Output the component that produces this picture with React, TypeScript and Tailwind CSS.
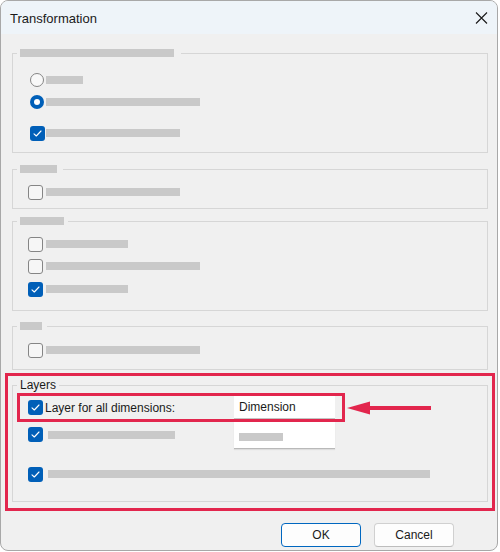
import React from "react";

const FONT = { fontFamily: '"Liberation Sans", Arial, sans-serif' };

function Bar({ w }: { w: number }) {
  return <div className="h-[8px] bg-[#c9c9c9]" style={{ width: w }} />;
}

function Check({ checked }: { checked?: boolean }) {
  if (checked) {
    return (
      <div className="w-[15px] h-[15px] rounded-[3px] bg-[#005fb8] flex items-center justify-center shrink-0">
        <svg width="15" height="15" viewBox="0 0 15 15">
          <path d="M4 7.8 L6.3 10 L11 5" fill="none" stroke="#ffffff" strokeWidth="1.1" strokeLinecap="round" strokeLinejoin="round" />
        </svg>
      </div>
    );
  }
  return <div className="w-[15px] h-[15px] rounded-[3px] border border-[#858585] bg-[#f6f6f6] shrink-0" />;
}

function Radio({ checked }: { checked?: boolean }) {
  if (checked) {
    return (
      <div className="w-[14px] h-[14px] rounded-full bg-[#005fb8] flex items-center justify-center shrink-0">
        <div className="w-[6px] h-[6px] rounded-full bg-white" />
      </div>
    );
  }
  return <div className="w-[14px] h-[14px] rounded-full border border-[#858585] bg-[#f8f8f8] shrink-0" />;
}

function Legend({ w, pr = 5 }: { w: number; pr?: number }) {
  return (
    <legend className="ml-[4px] pl-[3px]" style={{ paddingRight: pr }}>
      <div className="h-[8px] bg-[#c9c9c9]" style={{ width: w }} />
    </legend>
  );
}

export default function App() {
  return (
    <div className="w-[500px] h-[552px] bg-white" style={FONT}>
      <div className="w-[498px] h-[551px] border border-[#a8a8a8] rounded-[8px] overflow-hidden bg-[#f0f0f0] flex flex-col">
        {/* title bar */}
        <div className="h-[33px] bg-[#eef4f9] flex items-center justify-between pl-[9px] pr-[9px] shrink-0">
          <span className="text-[13px] text-[#1a1a1a] mt-[2px]">Transformation</span>
          <svg width="13" height="12" viewBox="0 0 13 12" className="mt-[1px]">
            <path d="M1 0.5 L12 11.5 M12 0.5 L1 11.5" stroke="#1a1a1a" strokeWidth="1.1" />
          </svg>
        </div>

        {/* body */}
        <div className="pl-[11px] pr-[9px] flex flex-col">
          {/* group 1 */}
          <fieldset className="mt-[15px] border border-[#d6d6d6]">
            <Legend w={154} pr={7} />
            <div className="pl-[17px] pt-[12px] pb-[8px]">
              <div className="h-[22px] flex items-center gap-[2px]">
                <Radio />
                <Bar w={37} />
              </div>
              <div className="h-[22px] flex items-center gap-[2px]">
                <Radio checked />
                <Bar w={154} />
              </div>
              <div className="h-[22px] mt-[9px] flex items-center gap-[1px]">
                <Check checked />
                <Bar w={134} />
              </div>
            </div>
          </fieldset>

          {/* group 2 */}
          <fieldset className="mt-[12px] border border-[#d6d6d6]">
            <Legend w={37} pr={6} />
            <div className="pl-[15px] pt-[8px] pb-[5px]">
              <div className="h-[22px] flex items-center gap-[3px]">
                <Check />
                <Bar w={134} />
              </div>
            </div>
          </fieldset>

          {/* group 3 */}
          <fieldset className="mt-[8px] border border-[#d6d6d6]">
            <Legend w={44} pr={4} />
            <div className="pl-[15px] pt-[8px] pb-[10px]">
              <div className="h-[22px] flex items-center gap-[3px]">
                <Check />
                <Bar w={82} />
              </div>
              <div className="h-[22px] flex items-center gap-[3px]">
                <Check />
                <Bar w={154} />
              </div>
              <div className="h-[22px] mt-[1px] flex items-center gap-[3px]">
                <Check checked />
                <Bar w={82} />
              </div>
            </div>
          </fieldset>

          {/* group 4 */}
          <fieldset className="mt-[11px] border border-[#d6d6d6]">
            <Legend w={22} pr={5} />
            <div className="pl-[15px] pt-[9px] pb-[8px]">
              <div className="h-[22px] flex items-center gap-[3px]">
                <Check />
                <Bar w={154} />
              </div>
            </div>
          </fieldset>

          {/* red annotated Layers group */}
          <div className="mt-[3px] -ml-[7px] -mr-[7px] border-[3px] border-[#e2264d] pl-[4px] pr-[4px] pt-[1px] pb-[6px]">
            <fieldset className="border border-[#d6d6d6] pb-[16px]">
              <legend className="ml-[4px] px-[3px] h-[16px] text-[12px] leading-[16px] text-[#1a1a1a]">Layers</legend>
              {/* row 1 */}
              <div className="flex items-center">
                <div className="ml-[4px] w-[328px] h-[29px] border-[3px] border-[#e2264d] pl-[8px] pr-[7px] flex items-center">
                  <div className="w-[206px] flex items-center">
                    <Check checked />
                    <span className="ml-[2px] text-[12px] text-[#1a1a1a] whitespace-nowrap">Layer for all dimensions:</span>
                  </div>
                  <div className="w-[101px] h-[23px] bg-white border-b border-[#c4c4c4] flex items-center pl-[5px]">
                    <span className="text-[12px] text-[#1a1a1a]">Dimension</span>
                  </div>
                </div>
                <svg width="84" height="14" viewBox="0 0 84 14" className="ml-[2px]">
                  <polygon points="0,7 23,0.5 23,13.5" fill="#e2264d" />
                  <rect x="20" y="5" width="64" height="4" fill="#e2264d" />
                </svg>
              </div>
              {/* row 2 */}
              <div className="flex">
                <div className="w-[221px] pl-[15px] pt-[5px] flex items-start">
                  <div className="flex items-center gap-[5px]">
                    <Check checked />
                    <Bar w={127} />
                  </div>
                </div>
                <div className="w-[101px] h-[27px] bg-white border-b border-[#b9b9b9] shadow-[0_1px_1px_rgba(0,0,0,0.08)] pl-[5px] pt-[11px]">
                  <Bar w={44} />
                </div>
              </div>
              {/* row 3 */}
              <div className="mt-[14px] h-[22px] pl-[15px] flex items-center gap-[5px]">
                <Check checked />
                <Bar w={382} />
              </div>
            </fieldset>
          </div>

          {/* buttons */}
          <div className="mt-[12px] flex justify-end gap-[13px] pr-[34px]">
            <button className="w-[80px] h-[24px] rounded-[4px] bg-[#fdfdfd] border-[1.5px] border-[#0067c0] text-[12px] text-[#1a1a1a] flex items-center justify-center">
              OK
            </button>
            <button className="w-[80px] h-[24px] rounded-[4px] bg-[#fdfdfd] border border-[#d0d0d0] border-b-[#bdbdbd] text-[12px] text-[#1a1a1a] flex items-center justify-center">
              Cancel
            </button>
          </div>
        </div>
      </div>
    </div>
  );
}
